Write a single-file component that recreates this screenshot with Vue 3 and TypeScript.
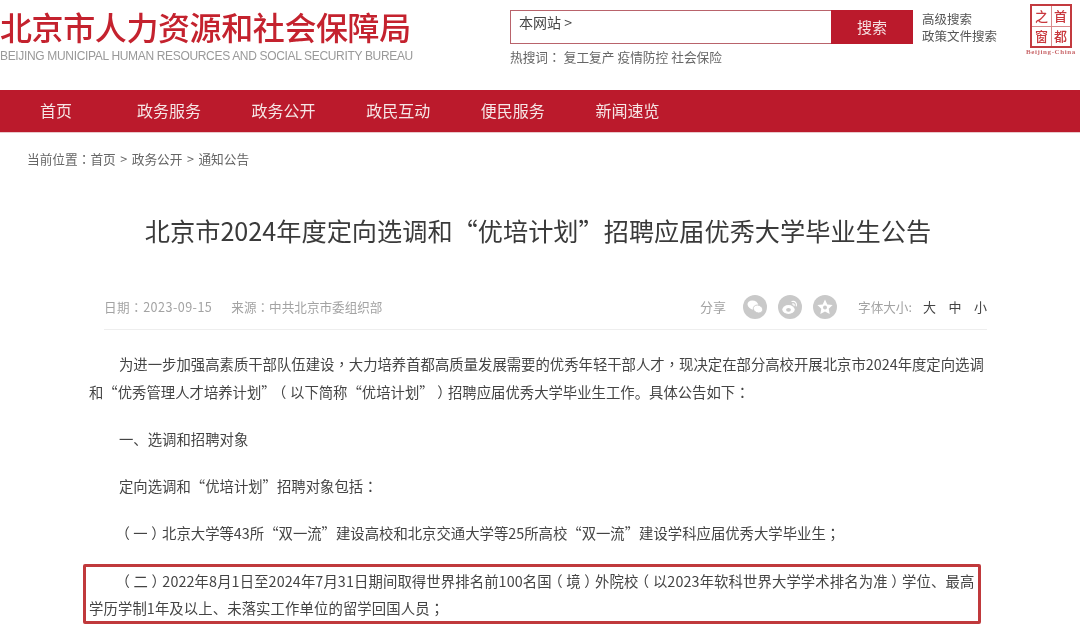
<script setup lang="ts">
const navItems = ['首页', '政务服务', '政务公开', '政民互动', '便民服务', '新闻速览']
const hotWords = ['复工复产', '疫情防控', '社会保险']
const sizes = ['大', '中', '小']

// | marks where a line wraps, so no span runs across two lines
const paragraphs = [
  '为进一步加强高素质干部队伍建设，大力培养首都高质量发展需要的优秀年轻干部人才，现决定在部分高校开展北京市2024年度定向选调|和“优秀管理人才培养计划”（以下简称“优培计划”）招聘应届优秀大学毕业生工作。具体公告如下：',
  '一、选调和招聘对象',
  '定向选调和“优培计划”招聘对象包括：',
  '（一）北京大学等43所“双一流”建设高校和北京交通大学等25所高校“双一流”建设学科应届优秀大学毕业生；',
]
const marked = '（二）2022年8月1日至2024年7月31日期间取得世界排名前100名国（境）外院校（以2023年软科世界大学学术排名为准）学位、最高|学历学制1年及以上、未落实工作单位的留学回国人员；'

// the original site centres its full-width punctuation, so split those marks out
function parts(text: string) {
  return text.split(/([，：；（）]|\|)/).filter((t) => t && t !== '|').map((t) => ({
    t,
    cls: '（）'.includes(t) ? 'paren' : '，：；'.includes(t) ? 'mid' : '',
  }))
}
</script>

<template>
  <div class="page">
    <header class="top">
      <div class="brand">
        <div class="brand-cn">北京市人力资源和社会保障局</div>
        <div class="brand-en">BEIJING MUNICIPAL HUMAN RESOURCES AND SOCIAL SECURITY BUREAU</div>
      </div>
      <div class="search">
        <div class="search-row">
          <div class="search-box">本网站 &gt;</div>
          <div class="search-btn">搜索</div>
        </div>
        <div class="hot">
          <span class="hot-label">热搜词<span class="mid">：</span></span>
          <span v-for="w in hotWords" :key="w" class="hot-word">{{ w }}</span>
        </div>
      </div>
      <div class="links">
        <span>高级搜索</span>
        <span>政策文件搜索</span>
      </div>
      <div class="logo">
        <div class="logo-grid">
          <span>之</span><span>首</span><span>窗</span><span>都</span>
        </div>
        <div class="logo-en">Beijing-China</div>
      </div>
    </header>

    <nav class="nav">
      <a v-for="item in navItems" :key="item" class="nav-item">{{ item }}</a>
    </nav>

    <div class="crumb">当前位置<span class="mid">：</span>首页 &gt; 政务公开 &gt; 通知公告</div>

    <h1 class="title">北京市2024年度定向选调和“优培计划”招聘应届优秀大学毕业生公告</h1>

    <div class="meta">
      <div class="meta-left">
        <span class="date">日期<span class="mid">：</span>2023-09-15</span>
        <span>来源<span class="mid">：</span>中共北京市委组织部</span>
      </div>
      <div class="meta-right">
        <span class="share">分享</span>
        <svg class="share-icon" viewBox="0 0 24 24">
          <circle cx="12" cy="12" r="12" fill="#c9c9c9" />
          <ellipse cx="10" cy="10" rx="5.6" ry="4.4" fill="#fff" transform="rotate(20 10 10)" />
          <ellipse cx="15" cy="14" rx="4.8" ry="3.8" fill="#fff" stroke="#c9c9c9" stroke-width="0.8" transform="rotate(20 15 14)" />
        </svg>
        <svg class="share-icon" viewBox="0 0 24 24">
          <circle cx="12" cy="12" r="12" fill="#c9c9c9" />
          <ellipse cx="10.5" cy="14.5" rx="6.2" ry="4.4" fill="#fff" />
          <ellipse cx="10.5" cy="14.8" rx="2.4" ry="1.9" fill="#c9c9c9" />
          <path d="M14 6.5c3-.8 5 1.5 4.3 4.3M14.5 9c1.3-.3 1.9.5 1.6 1.6" fill="none" stroke="#fff" stroke-width="1.2" stroke-linecap="round" />
        </svg>
        <svg class="share-icon" viewBox="0 0 24 24">
          <circle cx="12" cy="12" r="12" fill="#c9c9c9" />
          <path d="M12 4.5l2.3 4.9 5.3.7-3.9 3.6 1 5.3-4.7-2.6-4.7 2.6 1-5.3-3.9-3.6 5.3-.7z" fill="#fff" />
          <circle cx="12" cy="12.5" r="2" fill="#c9c9c9" />
        </svg>
        <span class="font-label">字体大小:</span>
        <span v-for="s in sizes" :key="s" class="size">{{ s }}</span>
      </div>
    </div>

    <article class="body">
      <p v-for="(para, i) in paragraphs" :key="i">
        <span v-for="(p, j) in parts(para)" :key="j" :class="p.cls">{{ p.t }}</span>
      </p>
      <p class="marked">
        <span v-for="(p, j) in parts(marked)" :key="j" :class="p.cls">{{ p.t }}</span>
      </p>
    </article>
  </div>
</template>

<style>
html, body {
  margin: 0;
  background: #fff;
  overflow: hidden;
}
</style>

<style scoped>
.page {
  width: 1080px;
  height: 637px;
  overflow: hidden;
  font-family: "Noto Sans CJK SC", "Liberation Sans", sans-serif;
  color: #444;
  text-spacing-trim: space-all;
  filter: blur(0.3px);
}

.mid {
  font-family: "Noto Sans CJK TC", sans-serif;
}

/* half-width paren with equal padding, sits centred in its full-width cell */
.paren {
  font-feature-settings: "halt";
  padding: 0 0.25em;
}

.top {
  height: 90px;
  display: flex;
  align-items: flex-start;
}

.brand {
  width: 510px;
  padding-top: 8px;
}

.brand-cn {
  font-size: 32px;
  line-height: 36px;
  font-weight: 500;
  color: #c4222e;
  white-space: nowrap;
  letter-spacing: -0.4px;
}

.brand-en {
  margin-top: 4px;
  font-family: "Liberation Sans", sans-serif;
  font-size: 12px;
  line-height: 16px;
  color: #999;
  white-space: nowrap;
  letter-spacing: -0.33px;
}

.search {
  width: 403px;
  padding-top: 10px;
}

.search-row {
  display: flex;
  height: 34px;
}

.search-box {
  flex: 1;
  border: 1px solid #b9636b;
  border-right: none;
  padding-left: 8px;
  font-size: 14px;
  line-height: 22px;
  color: #444;
}

.search-btn {
  width: 82px;
  background: #bb1a2c;
  color: #f5dfe0;
  font-size: 15px;
  line-height: 33px;
  text-align: center;
}

.hot {
  margin-top: 3px;
  font-size: 12.7px;
  line-height: 20px;
  color: #666;
  display: flex;
  gap: 3px;
}

.links {
  width: 108px;
  margin-left: 9px;
  padding-top: 10px;
  display: flex;
  flex-direction: column;
  font-size: 12.5px;
  line-height: 17px;
  color: #555;
}

.logo {
  margin-left: -4px;
  padding-top: 4px;
  width: 50px;
  display: flex;
  flex-direction: column;
  align-items: center;
}

.logo-grid {
  width: 42px;
  height: 44px;
  box-sizing: border-box;
  border: 2px solid #c33a3f;
  background: linear-gradient(#d98a8c, #d98a8c) center / 100% 1px no-repeat,
    linear-gradient(#d98a8c, #d98a8c) center / 1px 100% no-repeat;
  display: grid;
  grid-template-columns: 1fr 1fr;
  grid-template-rows: 1fr 1fr;
  color: #c9383d;
  font-size: 13px;
  line-height: 20px;
  font-weight: 500;
  text-align: center;
}

.logo-en {
  font-family: "Liberation Serif", serif;
  font-size: 7px;
  line-height: 9px;
  font-weight: 700;
  letter-spacing: 0.6px;
  color: #c9686b;
  white-space: nowrap;
}

.nav {
  height: 42px;
  background: #bb1a2c;
  display: flex;
  padding-left: 40px;
  gap: 50.6px;
  border-bottom: 1px solid #e9c9cc;
}

.nav-item {
  font-size: 16px;
  line-height: 41px;
  color: #f6e6e6;
}

.nav-item:first-child {
  margin-right: 14.4px;
}

.crumb {
  margin-top: 17px;
  padding-left: 27px;
  font-size: 12.7px;
  line-height: 18px;
  word-spacing: 1.6px;
  color: #666;
}

.title {
  margin: 44px 4px 0 0;
  font-size: 25.2px;
  line-height: 36px;
  font-weight: 400;
  color: #3a3a3a;
  text-align: center;
  white-space: nowrap;
}

.meta {
  margin: 45px 93px 0 104px;
  height: 37px;
  box-sizing: border-box;
  padding-bottom: 9px;
  border-bottom: 1px solid #eee;
  display: flex;
  justify-content: space-between;
  align-items: center;
  font-size: 12.6px;
  color: #a3a3a3;
}

.meta-left {
  display: flex;
  gap: 19px;
}

.date {
  letter-spacing: 0.45px;
}

.meta-right {
  display: flex;
  align-items: center;
}

.share {
  font-size: 13px;
  margin-right: 17px;
}

.share-icon {
  width: 24px;
  height: 24px;
  margin-right: 11px;
}

.font-label {
  margin-left: 10px;
  margin-right: 11px;
}

.size {
  font-size: 13px;
  color: #444;
  margin-right: 12.5px;
}

.size:last-child {
  margin-right: 0;
}

.body {
  margin: 20px 95px 0 89px;
  font-size: 14.36px;
  line-height: 28px;
  color: #444;
}

.body p {
  margin: 0 0 19px;
  text-indent: 30px;
}

.body .marked {
  margin: -2px 4px 0 -6px;
  padding: 0 3px;
  border: 3px solid #c0393c;
  border-radius: 2px;
  line-height: 27px;
  letter-spacing: 0.1px;
}
</style>
